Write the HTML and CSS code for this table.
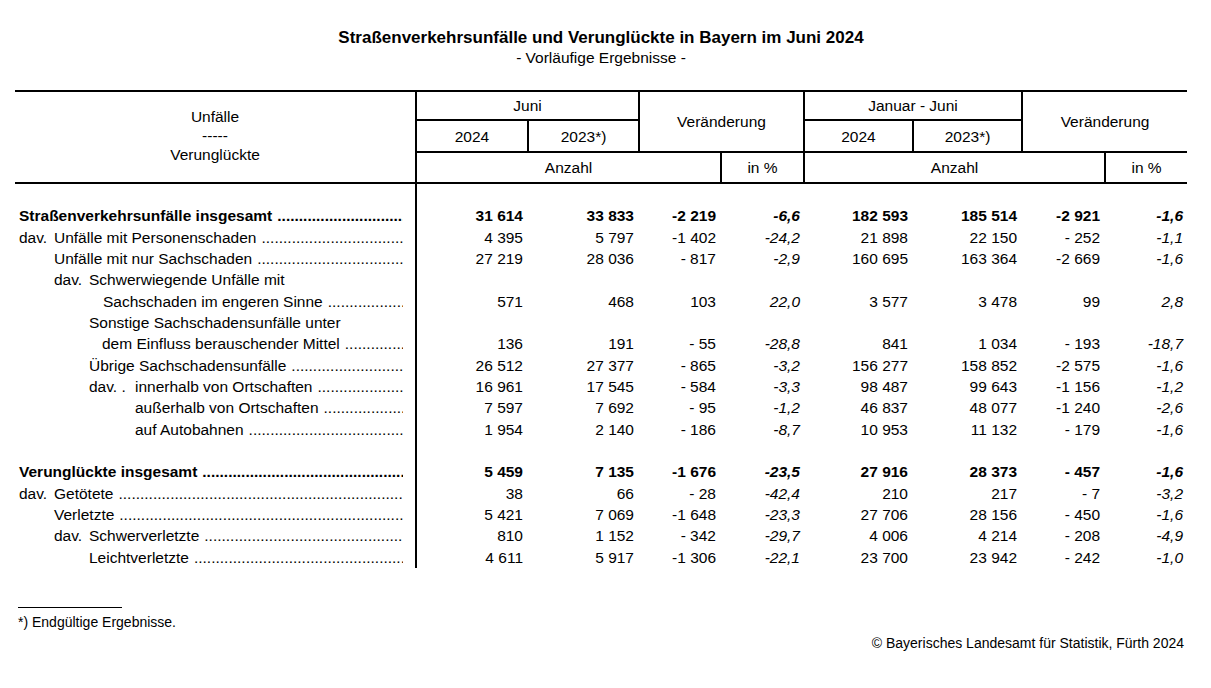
FILE: index.html
```html
<!DOCTYPE html>
<html lang="de">
<head>
<meta charset="utf-8">
<title>Straßenverkehrsunfälle und Verunglückte in Bayern im Juni 2024</title>
<link rel="stylesheet" href="styles.css">
</head>
<body>
<div class="page">
  <h1 class="title">Straßenverkehrsunfälle und Verunglückte in Bayern im Juni 2024</h1>
  <p class="subtitle">- Vorläufige Ergebnisse -</p>

  <table class="stats">
    <colgroup>
      <col class="c-lbl"><col class="c-a"><col class="c-b"><col class="c-c"><col class="c-d">
      <col class="c-e"><col class="c-f"><col class="c-g"><col class="c-h">
    </colgroup>
    <thead>
      <tr class="r1">
        <th rowspan="3" class="lbl">Unfälle<br>-----<br>Verunglückte</th>
        <th colspan="2">Juni</th>
        <th colspan="2" rowspan="2">Veränderung</th>
        <th colspan="2">Januar - Juni</th>
        <th colspan="2" rowspan="2" class="end">Veränderung</th>
      </tr>
      <tr class="r2">
        <th>2024</th><th>2023*)</th>
        <th>2024</th><th>2023*)</th>
      </tr>
      <tr class="r3">
        <th colspan="3">Anzahl</th><th>in %</th>
        <th colspan="3">Anzahl</th><th class="end">in %</th>
      </tr>
    </thead>
    <tbody>
      <tr class="gap"><td class="lbl"></td><td colspan="8"></td></tr>

      <tr class="bold">
        <td class="lbl"><div class="lab i0"><span class="txt">Straßenverkehrsunfälle insgesamt</span><span class="dots"></span></div></td>
        <td>31 614</td><td>33 833</td><td>-2 219</td><td class="pc">-6,6</td>
        <td>182 593</td><td>185 514</td><td>-2 921</td><td class="pc">-1,6</td>
      </tr>
      <tr>
        <td class="lbl"><div class="lab i0"><span class="pre">dav.</span><span class="txt">Unfälle mit Personenschaden</span><span class="dots"></span></div></td>
        <td>4 395</td><td>5 797</td><td>-1 402</td><td class="pc">-24,2</td>
        <td>21 898</td><td>22 150</td><td>- 252</td><td class="pc">-1,1</td>
      </tr>
      <tr>
        <td class="lbl"><div class="lab i1"><span class="txt">Unfälle mit nur Sachschaden</span><span class="dots"></span></div></td>
        <td>27 219</td><td>28 036</td><td>- 817</td><td class="pc">-2,9</td>
        <td>160 695</td><td>163 364</td><td>-2 669</td><td class="pc">-1,6</td>
      </tr>
      <tr>
        <td class="lbl"><div class="lab i1"><span class="pre">dav.</span><span class="txt">Schwerwiegende Unfälle mit</span></div></td>
        <td></td><td></td><td></td><td class="pc"></td>
        <td></td><td></td><td></td><td class="pc"></td>
      </tr>
      <tr>
        <td class="lbl"><div class="lab i2b"><span class="txt">Sachschaden im engeren Sinne</span><span class="dots"></span></div></td>
        <td>571</td><td>468</td><td>103</td><td class="pc">22,0</td>
        <td>3 577</td><td>3 478</td><td>99</td><td class="pc">2,8</td>
      </tr>
      <tr>
        <td class="lbl"><div class="lab i2"><span class="txt">Sonstige Sachschadensunfälle unter</span></div></td>
        <td></td><td></td><td></td><td class="pc"></td>
        <td></td><td></td><td></td><td class="pc"></td>
      </tr>
      <tr>
        <td class="lbl"><div class="lab i2a"><span class="txt">dem Einfluss berauschender Mittel</span><span class="dots"></span></div></td>
        <td>136</td><td>191</td><td>- 55</td><td class="pc">-28,8</td>
        <td>841</td><td>1 034</td><td>- 193</td><td class="pc">-18,7</td>
      </tr>
      <tr>
        <td class="lbl"><div class="lab i2"><span class="txt">Übrige Sachschadensunfälle</span><span class="dots"></span></div></td>
        <td>26 512</td><td>27 377</td><td>- 865</td><td class="pc">-3,2</td>
        <td>156 277</td><td>158 852</td><td>-2 575</td><td class="pc">-1,6</td>
      </tr>
      <tr>
        <td class="lbl"><div class="lab i2"><span class="pre wide">dav. .</span><span class="txt">innerhalb von Ortschaften</span><span class="dots"></span></div></td>
        <td>16 961</td><td>17 545</td><td>- 584</td><td class="pc">-3,3</td>
        <td>98 487</td><td>99 643</td><td>-1 156</td><td class="pc">-1,2</td>
      </tr>
      <tr>
        <td class="lbl"><div class="lab i3"><span class="txt">außerhalb von Ortschaften</span><span class="dots"></span></div></td>
        <td>7 597</td><td>7 692</td><td>- 95</td><td class="pc">-1,2</td>
        <td>46 837</td><td>48 077</td><td>-1 240</td><td class="pc">-2,6</td>
      </tr>
      <tr>
        <td class="lbl"><div class="lab i3"><span class="txt">auf Autobahnen</span><span class="dots"></span></div></td>
        <td>1 954</td><td>2 140</td><td>- 186</td><td class="pc">-8,7</td>
        <td>10 953</td><td>11 132</td><td>- 179</td><td class="pc">-1,6</td>
      </tr>

      <tr class="gap"><td class="lbl"></td><td colspan="8"></td></tr>

      <tr class="bold">
        <td class="lbl"><div class="lab i0"><span class="txt">Verunglückte insgesamt</span><span class="dots"></span></div></td>
        <td>5 459</td><td>7 135</td><td>-1 676</td><td class="pc">-23,5</td>
        <td>27 916</td><td>28 373</td><td>- 457</td><td class="pc">-1,6</td>
      </tr>
      <tr>
        <td class="lbl"><div class="lab i0"><span class="pre">dav.</span><span class="txt">Getötete</span><span class="dots"></span></div></td>
        <td>38</td><td>66</td><td>- 28</td><td class="pc">-42,4</td>
        <td>210</td><td>217</td><td>- 7</td><td class="pc">-3,2</td>
      </tr>
      <tr>
        <td class="lbl"><div class="lab i1"><span class="txt">Verletzte</span><span class="dots"></span></div></td>
        <td>5 421</td><td>7 069</td><td>-1 648</td><td class="pc">-23,3</td>
        <td>27 706</td><td>28 156</td><td>- 450</td><td class="pc">-1,6</td>
      </tr>
      <tr>
        <td class="lbl"><div class="lab i1"><span class="pre">dav.</span><span class="txt">Schwerverletzte</span><span class="dots"></span></div></td>
        <td>810</td><td>1 152</td><td>- 342</td><td class="pc">-29,7</td>
        <td>4 006</td><td>4 214</td><td>- 208</td><td class="pc">-4,9</td>
      </tr>
      <tr>
        <td class="lbl"><div class="lab i2"><span class="txt">Leichtverletzte</span><span class="dots"></span></div></td>
        <td>4 611</td><td>5 917</td><td>-1 306</td><td class="pc">-22,1</td>
        <td>23 700</td><td>23 942</td><td>- 242</td><td class="pc">-1,0</td>
      </tr>
    </tbody>
  </table>

  <div class="foot">
    <div class="foot-rule"></div>
    <p class="footnote">*) Endgültige Ergebnisse.</p>
    <p class="copyright">© Bayerisches Landesamt für Statistik, Fürth 2024</p>
  </div>
</div>
</body>
</html>
```
FILE: styles.css
```css
html, body {
  margin: 0;
  padding: 0;
  background: #fff;
}
body {
  font-family: "Liberation Sans", Arial, sans-serif;
  font-size: 15.5px;
  color: #000;
}
.page {
  padding: 28px 24px 0 15px;
}
.title {
  margin: 0;
  text-align: center;
  font-size: 17px;
  line-height: 20px;
  font-weight: bold;
}
.subtitle {
  margin: 0;
  text-align: center;
  font-size: 15.5px;
  line-height: 20px;
}

.stats {
  margin-top: 22px;
  width: 1172px;
  table-layout: fixed;
  border-collapse: collapse;
  border-top: 2px solid #000;
}
.c-lbl { width: 401px; }
.c-a { width: 112px; }
.c-b { width: 111px; }
.c-c { width: 82px; }
.c-d { width: 83px; }
.c-e { width: 109px; }
.c-f { width: 109px; }
.c-g { width: 83px; }
.c-h { width: 82px; }

.stats th {
  font-weight: normal;
  text-align: center;
  vertical-align: middle;
  padding: 0;
  border: 2px solid #000;
  line-height: 19px;
}
.stats th.lbl {
  border-left: none;
  padding-bottom: 4px;
}
.stats th.end { border-right: none; }
.r1 { height: 29px; }
.r2 { height: 32px; }
.r3 { height: 31px; }

.stats td {
  padding: 0 5px 0 0;
  text-align: right;
  white-space: nowrap;
  line-height: 21.33px;
  height: 21.33px;
}
.stats td.lbl {
  border-right: 2px solid #000;
  padding: 0;
  text-align: left;
}
.stats td.pc {
  font-style: italic;
  padding-right: 4px;
}
.bold td { font-weight: bold; }

.lab {
  display: flex;
  align-items: baseline;
  padding-right: 12px;
  overflow: hidden;
}
.i0 { padding-left: 4px; }
.i1 { padding-left: 39px; }
.i2 { padding-left: 74px; }
.i2a { padding-left: 87px; }
.i2b { padding-left: 88px; }
.i3 { padding-left: 120px; }
.pre {
  flex: none;
  width: 35px;
}
.pre.wide { width: 46px; }
.txt { flex: none; }
.dots {
  flex: 1 1 auto;
  min-width: 0;
  overflow: hidden;
  white-space: nowrap;
  padding-left: 5px;
  font-weight: normal;
}
.bold .dots { font-weight: bold; }
.dots::before {
  content: "........................................................................................................................................................";
}

.foot-rule {
  width: 104px;
  border-top: 1px solid #000;
  margin: 39px 0 0 3px;
}
.footnote {
  margin: 4px 0 0 3px;
  font-size: 14px;
  line-height: 20px;
}
.copyright {
  margin: 0 3px 0 0;
  text-align: right;
  font-size: 14px;
  line-height: 22px;
}
```
